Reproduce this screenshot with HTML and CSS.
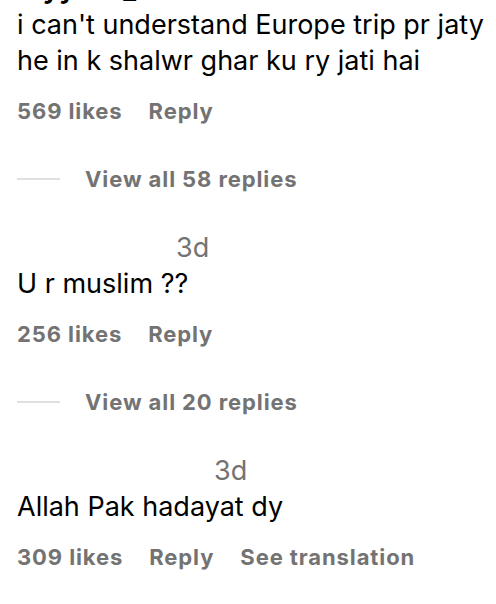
FILE: index.html
```html
<!DOCTYPE html>
<html lang="en">
<head>
  <meta charset="UTF-8" />
  <meta name="viewport" content="width=device-width, initial-scale=1.0"/>
  <title>Comments</title>
  <link rel="stylesheet" href="styles.css">
</head>
<body>
  <div class="comments">

    <div class="comment first">
      <div class="head"><span class="user">rayyaan_</span></div>
      <p class="text">i can't understand Europe trip pr jaty he in k shalwr ghar ku ry jati hai</p>
      <div class="meta">
        <span>569 likes</span>
        <span>Reply</span>
      </div>
      <div class="view"><span class="dash"></span><span>View all 58 replies</span></div>
    </div>

    <div class="comment">
      <div class="head"><span class="hidden-user w1"></span><span class="time">3d</span></div>
      <p class="text">U r muslim ??</p>
      <div class="meta">
        <span>256 likes</span>
        <span>Reply</span>
      </div>
      <div class="view"><span class="dash"></span><span>View all 20 replies</span></div>
    </div>

    <div class="comment">
      <div class="head"><span class="hidden-user w2"></span><span class="time">3d</span></div>
      <p class="text">Allah Pak hadayat dy</p>
      <div class="meta">
        <span>309 likes</span>
        <span>Reply</span>
        <span>See translation</span>
      </div>
    </div>

  </div>
</body>
</html>
```

FILE: styles.css
```css
body { margin: 0; background: #fff; color: #000; font-family: Inter, "Liberation Sans", sans-serif; }
.comments { padding: 0 0 0 17px; margin-top: -29px; }
.comment { margin-top: 37px; }
.comment.first { margin-top: 0; }
.head { font-size: 27px; line-height: 36px; height: 36px; white-space: nowrap; }
.user { font-weight: 700; }
.hidden-user { display: inline-block; }
.hidden-user.w1 { width: 159px; }
.hidden-user.w2 { width: 197px; }
.time { color: #737373; }
.text { margin: 0; font-size: 27px; line-height: 36px; }
.meta {
  display: flex; gap: 26px; margin-top: 18px;
  font-size: 22px; line-height: 28px; font-weight: 700; color: #737373; letter-spacing: 0.9px;
}
.view {
  display: flex; align-items: center; gap: 25px; margin-top: 40px;
  font-size: 22px; line-height: 28px; font-weight: 700; color: #737373; letter-spacing: 0.9px;
}
.dash { width: 43px; height: 2px; background: #e0e0e0; }
```
